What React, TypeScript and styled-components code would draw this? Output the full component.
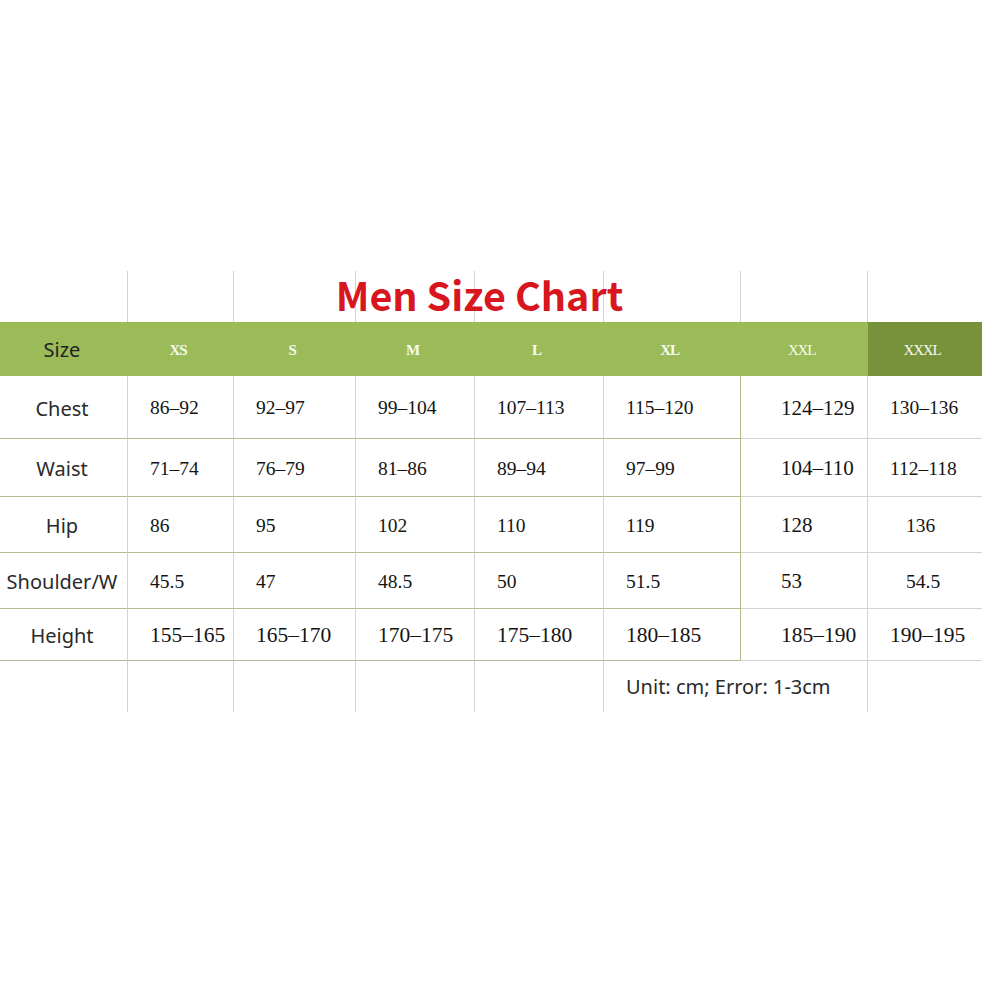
import React from 'react';
import styled, { createGlobalStyle } from 'styled-components';

const GlobalStyle = createGlobalStyle`
  body {
    margin: 0;
    background: #ffffff;
  }
`;

const GRID = '#d3d3d3';
const OLIVE = '#b9b98e';

const sizes = ['XS', 'S', 'M', 'L', 'XL', 'XXL', 'XXXL'];

interface MeasureRow {
  label: string;
  values: string[];
  big?: boolean;
}

const rows: MeasureRow[] = [
  { label: 'Chest', values: ['86–92', '92–97', '99–104', '107–113', '115–120', '124–129', '130–136'] },
  { label: 'Waist', values: ['71–74', '76–79', '81–86', '89–94', '97–99', '104–110', '112–118'] },
  { label: 'Hip', values: ['86', '95', '102', '110', '119', '128', '136'] },
  { label: 'Shoulder/W', values: ['45.5', '47', '48.5', '50', '51.5', '53', '54.5'] },
  { label: 'Height', values: ['155–165', '165–170', '170–175', '175–180', '180–185', '185–190', '190–195'], big: true },
];

const Page = styled.div`
  padding-top: 271px;
  width: 982px;
`;

const Chart = styled.div`
  display: grid;
  grid-template-columns: 128px 106px 122px 119px 129px 137px 127px 114px;
  grid-template-rows: 51px 54px 63px 58px 56px 56px 52px 51px;
`;

const Title = styled.h1`
  grid-row: 1;
  grid-column: 1 / -1;
  z-index: 1;
  margin: 0;
  padding: 0 23px 6px 0;
  display: flex;
  align-items: center;
  justify-content: center;
  font-family: 'Noto Sans CJK SC', 'Noto Sans', sans-serif;
  font-weight: 700;
  font-size: 39.5px;
  color: #d7161e;
`;

const Blank = styled.div<{ $row: number; $col: number; $last?: boolean }>`
  grid-row: ${(p) => p.$row};
  grid-column: ${(p) => p.$col};
  box-sizing: border-box;
  border-right: ${(p) => (p.$last ? 'none' : `1px solid ${GRID}`)};
`;

const HeadCell = styled.div<{ $dark?: boolean; $light?: boolean; $label?: boolean }>`
  grid-row: 2;
  display: flex;
  align-items: center;
  justify-content: center;
  background: ${(p) => (p.$dark ? '#77923b' : '#9bbb59')};
  color: ${(p) => (p.$label ? '#222222' : '#f7faee')};
  font-family: ${(p) => (p.$label ? "'Noto Sans', sans-serif" : "'Liberation Serif', serif")};
  font-size: ${(p) => (p.$label ? '20px' : '15px')};
  font-weight: ${(p) => (p.$label || p.$light ? 400 : 700)};
  letter-spacing: ${(p) => (p.$label ? '0' : '-1.2px')};
  padding: ${(p) => (p.$label ? '0 4px 0 0' : '2px 6px 0 0')};
`;

const LabelCell = styled.div`
  grid-column: 1;
  box-sizing: border-box;
  display: flex;
  align-items: center;
  justify-content: center;
  border-right: 1px solid ${GRID};
  border-bottom: 1px solid ${OLIVE};
  font-family: 'Noto Sans', sans-serif;
  font-size: 20px;
  color: #2a2a2a;
  padding: 2px 3px 0 0;
`;

const ValueCell = styled.div<{ $pad: number; $size: number; $edge?: 'olive' | 'none'; $grey?: boolean }>`
  box-sizing: border-box;
  display: flex;
  align-items: center;
  padding-left: ${(p) => p.$pad}px;
  padding-top: 2px;
  border-right: ${(p) =>
    p.$edge === 'none' ? 'none' : `1px solid ${p.$edge === 'olive' ? OLIVE : GRID}`};
  border-bottom: 1px solid ${(p) => (p.$grey ? GRID : OLIVE)};
  font-family: 'Liberation Serif', serif;
  font-size: ${(p) => p.$size}px;
  color: #141414;
  white-space: nowrap;
`;

const Note = styled.div`
  grid-row: 8;
  grid-column: 6 / 8;
  box-sizing: border-box;
  display: flex;
  align-items: center;
  padding: 0 0 0 22px;
  border-right: 1px solid ${GRID};
  font-family: 'Noto Sans', sans-serif;
  font-size: 20px;
  color: #2a2a2a;
  white-space: nowrap;
`;

const padFor = (col: number, row: string) => {
  if (col === 5) return 40;
  if (col === 6 && (row === 'Hip' || row === 'Shoulder/W')) return 38;
  return 22;
};

export default function App() {
  return (
    <Page>
      <GlobalStyle />
      <Chart>
        {Array.from({ length: 8 }, (_, i) => (
          <Blank key={`t${i}`} $row={1} $col={i + 1} $last={i === 7} />
        ))}
        <Title>Men Size Chart</Title>

        <HeadCell $label>Size</HeadCell>
        {sizes.map((s, i) => (
          <HeadCell key={s} $dark={i === 6} $light={i >= 5}>
            {s}
          </HeadCell>
        ))}

        {rows.map((r) => (
          <React.Fragment key={r.label}>
            <LabelCell>{r.label}</LabelCell>
            {r.values.map((v, i) => (
              <ValueCell
                key={i}
                $pad={padFor(i, r.label)}
                $size={r.big ? 21.5 : i === 5 ? 21 : 19.5}
                $edge={i === 4 ? 'olive' : i === 6 ? 'none' : undefined}
                $grey={i >= 5}
              >
                {v}
              </ValueCell>
            ))}
          </React.Fragment>
        ))}

        {[1, 2, 3, 4, 5].map((c) => (
          <Blank key={`f${c}`} $row={8} $col={c} />
        ))}
        <Note>Unit: cm; Error: 1-3cm</Note>
        <Blank $row={8} $col={8} $last />
      </Chart>
    </Page>
  );
}
